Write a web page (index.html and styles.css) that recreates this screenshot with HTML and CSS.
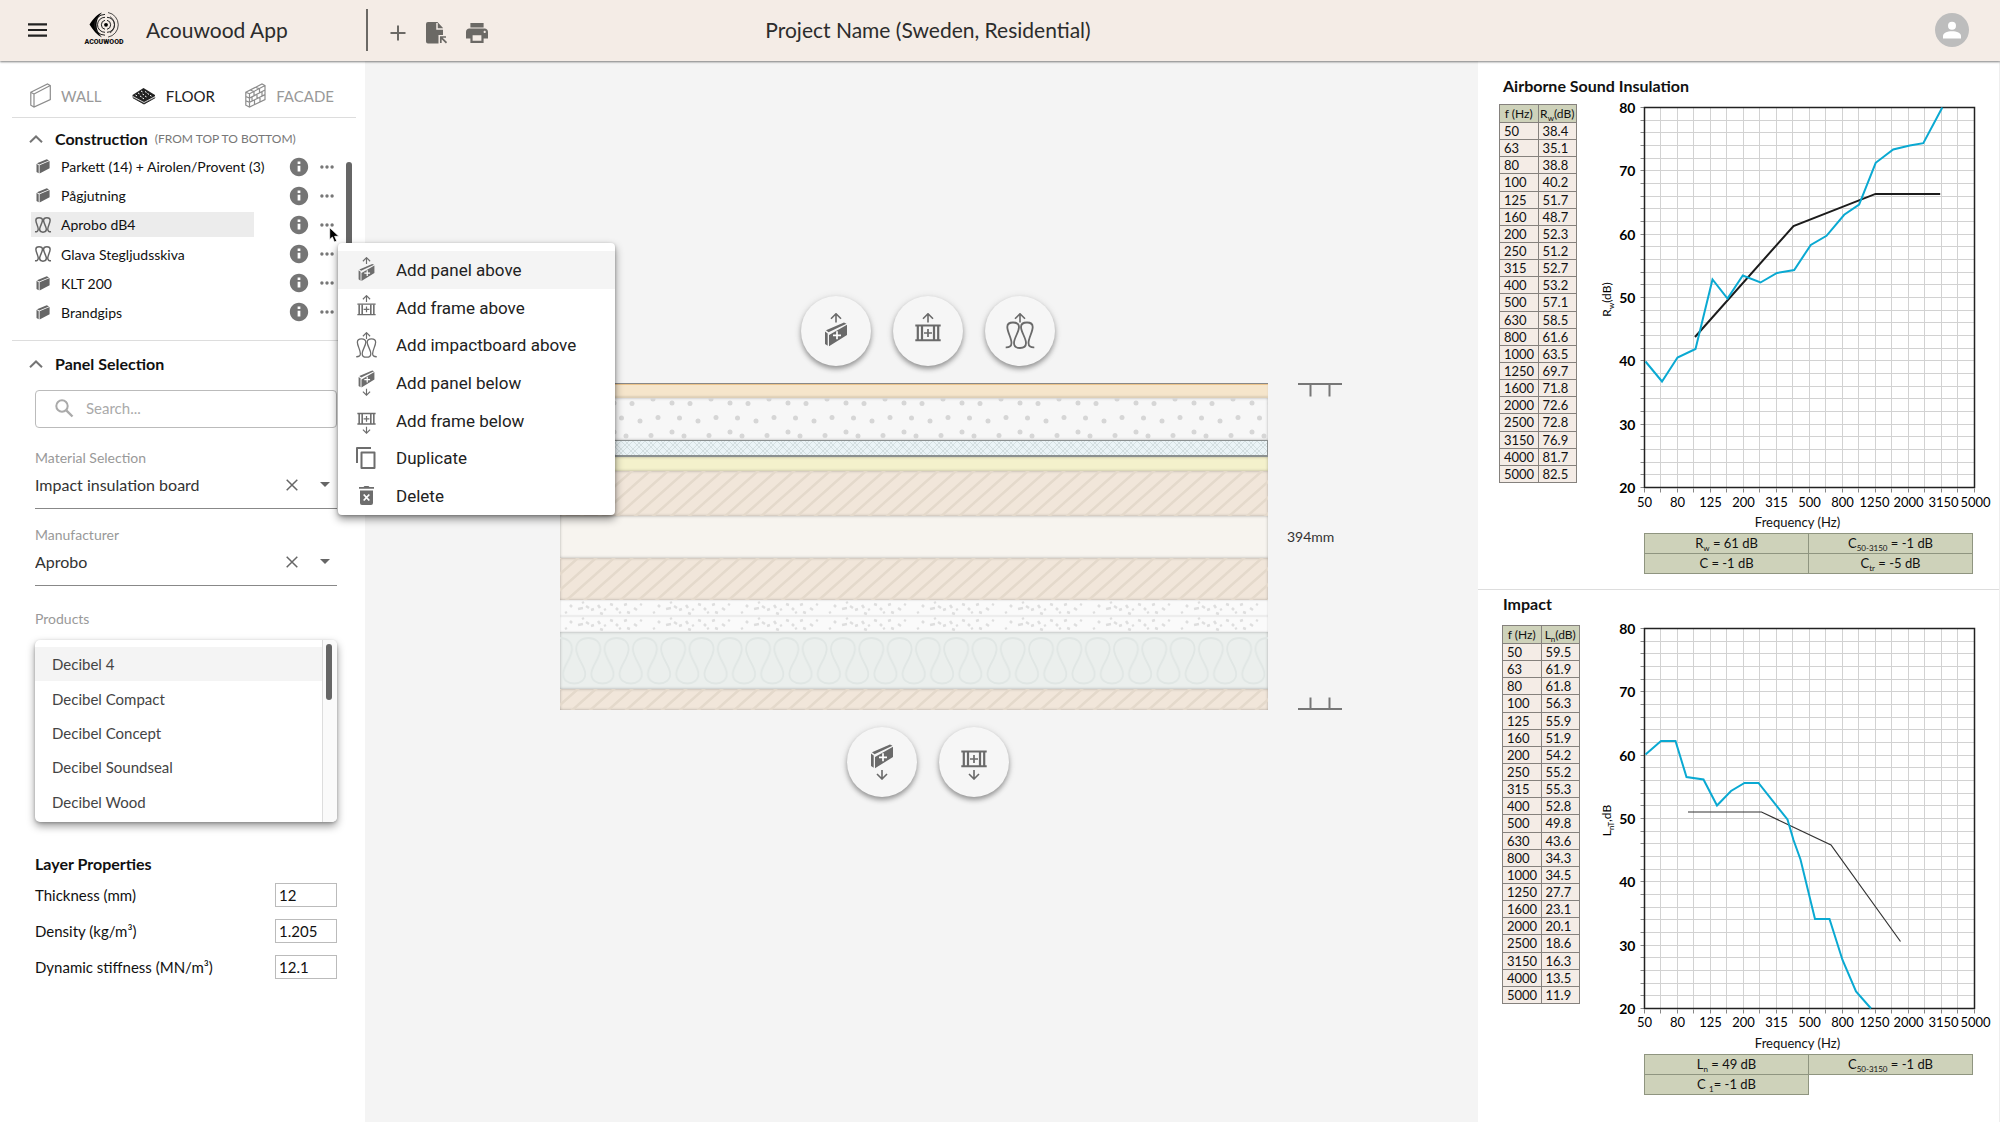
FILE: index.html
```html
<!DOCTYPE html>
<html lang="en">
<head>
<meta charset="utf-8">
<meta name="viewport" content="width=device-width, initial-scale=1">
<title>Acouwood App</title>
<link rel="stylesheet" href="styles.css">
</head>
<body>
<svg class="defs" aria-hidden="true">
  <defs>
    <symbol id="arrow-up" viewBox="0 0 32 36"><path d="M16 9.500V1M11 5.800l5-5 5 5" fill="none" stroke="currentColor" stroke-width="1.600"/></symbol>
    <g id="slab"><path d="M9 22 27 11.700V22L9 33.300zM5 18.500l2.700 2V32.800L5 31zM6 17.300 24 9.500l2.500 1.200-18 8.500z" fill="currentColor"/><path d="M17 18.300v8M13 22.300h8" stroke="#fff" stroke-width="1.700"/></g>
    <g id="frame"><path d="M3.300 12.600h25.400M3.300 27.200h25.400" stroke="currentColor" stroke-width="2"/><path d="M5.800 13v14M10 13v14M22 13v14M26.200 13v14" stroke="currentColor" stroke-width="2.200"/><path d="M16 16v8M12 20h8" stroke="currentColor" stroke-width="1.700"/></g>
    <path id="coil" d="M1.700 34.300C5 34.500 7.500 33.500 7.500 30 7.500 25 3.300 19 3.300 14 3.300 11 5.500 9.500 9 9.500S15 11 15 14C15 19 10 25 10 30 10 33.500 12.500 35 16 35S22 33.500 22 30C22 25 17 19 17 14 17 11 19.500 9.500 23 9.500S28.700 11 28.700 14C28.700 19 24.500 25 24.500 30 24.500 33.500 27 34.500 30.300 34.300" fill="none" stroke="currentColor"/>
    <symbol id="panel-above" viewBox="0 0 32 36"><use href="#arrow-up" width="32" height="36"/><use href="#slab"/></symbol>
    <symbol id="frame-above" viewBox="0 0 32 36"><use href="#arrow-up" width="32" height="36"/><use href="#frame"/></symbol>
    <symbol id="impact-above" viewBox="0 0 32 36"><use href="#arrow-up" width="32" height="36"/><use href="#coil" stroke-width="1.800"/></symbol>
    <symbol id="panel-below" viewBox="0 0 32 36"><use href="#slab" y="-9"/><path d="M16 26v8.500M11 30l5 5 5-5" fill="none" stroke="currentColor" stroke-width="1.600"/></symbol>
    <symbol id="frame-below" viewBox="0 0 32 36"><use href="#frame" y="-5"/><path d="M16 26v8.500M11 30l5 5 5-5" fill="none" stroke="currentColor" stroke-width="1.600"/></symbol>
    <symbol id="panel" viewBox="0 0 14 15"><path d="M3.600 6.300 13.600 2v7.200L3.600 14.500zM.5 4.800l2.200 1.400v8L.5 12.900zM1 4.200 10.800.300 13 1.400 3.200 5.500z" fill="currentColor"/></symbol>
    <symbol id="impact" viewBox="0 8 32 28.500"><use href="#coil" stroke-width="2.600"/></symbol>
    <symbol id="info" viewBox="0 0 24 24"><path d="M12 2C6.480 2 2 6.480 2 12s4.480 10 10 10 10-4.480 10-10S17.520 2 12 2zm1.500 15h-3v-6.500h3V17zm0-8.200h-3V6h3v2.800z" fill="currentColor"/></symbol>
    <symbol id="dots" viewBox="0 0 14 4"><circle cx="1.900" cy="2" r="1.700"/><circle cx="7" cy="2" r="1.700"/><circle cx="12.100" cy="2" r="1.700"/></symbol>
    <symbol id="chevron" viewBox="0 0 14 8"><path d="M1 7.200 7 1.500l6 5.700" fill="none" stroke="#757575" stroke-width="2"/></symbol>
    <symbol id="close" viewBox="0 0 12 12"><path d="M.7.700l10.600 10.600M11.300.700.7 11.300" stroke="#666" stroke-width="1.500"/></symbol>
    <symbol id="caret" viewBox="0 0 10 5"><path d="M0 0h10L5 5z" fill="#666"/></symbol>

    <pattern id="hatch" width="18" height="16" patternUnits="userSpaceOnUse"><path d="M-2 17.800 20-1.800M-20 17.800 2-1.800M16 17.800 38-1.800" stroke="#e4d9cb" stroke-width="2.500"/></pattern>
    <pattern id="pebbles" width="58" height="42" patternUnits="userSpaceOnUse"><g fill="#d6d6d6"><circle cx="54" cy="5" r="2.500"/><circle cx="14" cy="5.500" r="2.500"/><circle cx="35" cy="1" r="2.500"/><circle cx="40" cy="19.500" r="2.500"/><circle cx="3.500" cy="20" r="2.500"/><circle cx="22" cy="23" r="2.500"/><circle cx="54" cy="34" r="2.500"/><circle cx="33" cy="37.500" r="2.500"/><circle cx="8" cy="38" r="2.500"/></g></pattern>
    <pattern id="mesh" width="12" height="12" patternUnits="userSpaceOnUse"><path d="M0 0l12 12M12 0 0 12M-1 7l6 6M3-1l10 10M13 7l-6 6M9-1l-10 10" stroke="#d0dbde" stroke-width=".9"/></pattern>
    <pattern id="grains" width="88" height="16" patternUnits="userSpaceOnUse"><path d="M10 5l2 2M18 9l5-1M26 6l3 2M31 10l3-1M38 5l2 3M44 10l2-1M50 4l3 1M56 8l2 2M64 5l3-1M67 12l3 1M74 8l3 2M80 4l2 1M22 3l2-1M5 13l2-1M40 13l3 1M59 13l2-1" stroke="#dedede" stroke-width="2.500"/></pattern>
    <pattern id="loops" width="28.300" height="57" patternUnits="userSpaceOnUse" patternTransform="translate(-14 0)"><path d="M-11 42C-11 48-6 51.500 0 51.500S11 48 11 42C11 34 2 26 2 17 2 10 7 6 14 6S26 10 26 17C26 26 17 34 17 42 17 48 22 51.500 28.300 51.500S39 48 39 42" fill="none" stroke="#e0e6e4" stroke-width="1.800"/></pattern>
    <g id="plot-grid">
      <path d="M16 0V380M33 0V380M49 0V380M66 0V380M82 0V380M99 0V380M115 0V380M132 0V380M148 0V380M165 0V380M181 0V380M198 0V380M214 0V380M231 0V380M247 0V380M264 0V380M280 0V380M297 0V380M313 0V380M0 13H330M0 25H330M0 38H330M0 51H330M0 63H330M0 76H330M0 89H330M0 101H330M0 114H330M0 127H330M0 139H330M0 152H330M0 165H330M0 177H330M0 190H330M0 203H330M0 215H330M0 228H330M0 241H330M0 253H330M0 266H330M0 279H330M0 291H330M0 304H330M0 317H330M0 329H330M0 342H330M0 355H330M0 367H330" stroke="#d2d2d2"/>
      <path d="M0 381v4M16 381v4M33 381v4M49 381v4M66 381v4M82 381v4M99 381v4M115 381v4M132 381v4M148 381v4M165 381v4M181 381v4M198 381v4M214 381v4M231 381v4M247 381v4M264 381v4M280 381v4M297 381v4M313 381v4M330 381v4M-4 0h4M-4 13h4M-4 25h4M-4 38h4M-4 51h4M-4 63h4M-4 76h4M-4 89h4M-4 101h4M-4 114h4M-4 127h4M-4 139h4M-4 152h4M-4 165h4M-4 177h4M-4 190h4M-4 203h4M-4 215h4M-4 228h4M-4 241h4M-4 253h4M-4 266h4M-4 279h4M-4 291h4M-4 304h4M-4 317h4M-4 329h4M-4 342h4M-4 355h4M-4 367h4M-4 380h4" stroke="#888"/>
      <path d="M0 0H330V380H0z" fill="none" stroke="#222" stroke-width="1.500"/>
    </g>
  </defs>
</svg>

<header class="topbar">
  <div class="brand">
    <button class="icon-btn menu-btn" aria-label="Menu"><svg width="20" height="14" viewBox="0 0 20 14"><path d="M0 1.300h19M0 7h19M0 12.700h19" stroke="#222" stroke-width="2.200"/></svg></button>
    <div class="logo">
      <svg width="30" height="26" viewBox="0 0 30 26" aria-hidden="true">
        <path d="M13 .5C8.500 2 4 7 .5 12.500 4 18 8 23 13 25.500 9 21 7.500 17 7.500 12.800S9 4.500 13 .5z"/>
        <circle cx="17" cy="12.800" r="1.900"/>
        <g fill="none" stroke="#222">
          <path d="M16 8.300a4.600 4.600 0 0 0 0 9M18 8.300a4.600 4.600 0 0 1 0 9"/>
          <path d="M16 5.300a7.500 7.500 0 0 0 0 15M18 5.300a7.500 7.500 0 0 1 0 15"/>
          <path d="M16 2.400a10.400 10.400 0 0 0 0 20.800"/>
          <path d="M19 .5a12.500 12.500 0 0 1 0 24.600M21 4.600a9.700 9.700 0 0 1 0 16.400" stroke-width=".8"/>
        </g>
      </svg>
      <span class="logo-name">ACOUWOOD</span>
    </div>
    <span class="app-name">Acouwood App</span>
  </div>
  <div class="tools">
    <button class="icon-btn" aria-label="New"><svg width="18" height="16" viewBox="0 0 18 16"><path d="M9 .5v15M1.500 8h15" stroke="#6b6965" stroke-width="2"/></svg></button>
    <button class="icon-btn" aria-label="Export"><svg width="21" height="22" viewBox="0 0 21 22"><path d="M2 0h9.500L17 6v7h-4.500v8.500H2a2 2 0 0 1-2-2V2a2 2 0 0 1 2-2z" fill="#6b6965"/><path d="M11 1v6h6" fill="none" stroke="#f4ece6" stroke-width="1.500"/><path d="M14 15h6M14.800 15v6M15 15.300l5.500 5.500" stroke="#6b6965" stroke-width="1.700"/></svg></button>
    <button class="icon-btn" aria-label="Print"><svg width="22" height="20" viewBox="2 3 20 18" preserveAspectRatio="none"><path d="M19 8H5c-1.660 0-3 1.340-3 3v6h4v4h12v-4h4v-6c0-1.660-1.340-3-3-3zm-3 11H8v-5h8v5zm3-7c-.55 0-1-.45-1-1s.45-1 1-1 1 .45 1 1-.45 1-1 1zm-1-9H6v4h12V3z" fill="#6b6965"/></svg></button>
  </div>
  <h1 class="project-title">Project Name (Sweden, Residential)</h1>
  <button class="avatar" aria-label="Account"><svg width="18" height="18" viewBox="0 0 18 18"><circle cx="9" cy="4.800" r="4"/><path d="M0 17.500V15c0-3 4-4.800 9-4.800s9 1.800 9 4.800v2.500z"/></svg></button>
</header>

<div class="workspace">
  <aside class="sidebar">
    <div class="tabs" role="tablist">
      <button class="tab" role="tab" aria-selected="false"><svg width="21" height="25" viewBox="0 0 21 25"><path d="M.8 9.200 17.500 1l2.800 1.500v14L4 24 .8 22.200zM.8 9.200 4 11v13M4 11 20.300 2.500" fill="none" stroke="#8c8c8c" stroke-width="1.200"/></svg>WALL</button>
      <button class="tab active" role="tab" aria-selected="true"><svg width="24" height="18" viewBox="0 0 24 18"><path d="M11.500 1 23 8v2l-11 7L.5 10V8z" fill="#222"/><path d="M.8 10.700 12 17l11.200-6.300" fill="none" stroke="#222"/><path d="M.5 9.300 12 15.500 23.500 9.300" stroke="#fff" stroke-width=".8" fill="none"/><path d="M9 4l1.500.9M13 4.500l1.500.9M6 6l1.500.9M10.500 7l1.500.9M15.500 6.500l1.500.9M3.500 8l1.500.9M8 9l1.500.9M13 9l1.500.9M18 8.300l1.500.9M10.500 11l1.500.9" stroke="#fff"/></svg>FLOOR</button>
      <button class="tab" role="tab" aria-selected="false"><svg width="21" height="25" viewBox="0 0 21 25"><path d="M.8 9.200 17 1l3 1.500v14L4.500 24 .8 22.200zM.8 9.200l3.700 1.600V24M4.500 10.800 20 2.500M.8 13.500l3.700 1.600L20 7M.8 17.800l3.700 1.600L20 11.600M9 8.500v4.300M14.500 5.500v4.300M7 14v4.300M12 11.300v4.300M17 8.700V13M9.500 17v4.300M15 14.300v4.300M5 7l4 1.500M10.500 4.300l4 1.600" fill="none" stroke="#8c8c8c" stroke-width="1.200"/></svg>FACADE</button>
    </div>

    <section class="construction">
      <h2 class="section-title"><svg width="14" height="8"><use href="#chevron"/></svg>Construction <small>(FROM TOP TO BOTTOM)</small></h2>
      <ul class="layers-list">
        <li><span class="layer-name"><svg width="14" height="15"><use href="#panel"/></svg>Parkett (14) + Airolen/Provent (3)</span><button class="icon-btn info" aria-label="Info"><svg width="22" height="22"><use href="#info"/></svg></button><button class="icon-btn more" aria-label="More"><svg width="14" height="4"><use href="#dots"/></svg></button></li>
        <li><span class="layer-name"><svg width="14" height="15"><use href="#panel"/></svg>Pågjutning</span><button class="icon-btn info" aria-label="Info"><svg width="22" height="22"><use href="#info"/></svg></button><button class="icon-btn more" aria-label="More"><svg width="14" height="4"><use href="#dots"/></svg></button></li>
        <li><span class="layer-name selected"><svg class="wide" width="18" height="16"><use href="#impact"/></svg>Aprobo dB4</span><button class="icon-btn info" aria-label="Info"><svg width="22" height="22"><use href="#info"/></svg></button><button class="icon-btn more" aria-label="More"><svg width="14" height="4"><use href="#dots"/></svg></button></li>
        <li><span class="layer-name"><svg class="wide" width="18" height="16"><use href="#impact"/></svg>Glava Stegljudsskiva</span><button class="icon-btn info" aria-label="Info"><svg width="22" height="22"><use href="#info"/></svg></button><button class="icon-btn more" aria-label="More"><svg width="14" height="4"><use href="#dots"/></svg></button></li>
        <li><span class="layer-name"><svg width="14" height="15"><use href="#panel"/></svg>KLT 200</span><button class="icon-btn info" aria-label="Info"><svg width="22" height="22"><use href="#info"/></svg></button><button class="icon-btn more" aria-label="More"><svg width="14" height="4"><use href="#dots"/></svg></button></li>
        <li><span class="layer-name"><svg width="14" height="15"><use href="#panel"/></svg>Brandgips</span><button class="icon-btn info" aria-label="Info"><svg width="22" height="22"><use href="#info"/></svg></button><button class="icon-btn more" aria-label="More"><svg width="14" height="4"><use href="#dots"/></svg></button></li>
      </ul>
      <span class="list-thumb"></span>
    </section>

    <section class="selection">
      <h2 class="section-title"><svg width="14" height="8"><use href="#chevron"/></svg>Panel Selection</h2>
      <label class="search">
        <svg width="19" height="19" viewBox="0 0 19 19" aria-hidden="true"><circle cx="7" cy="7" r="5.700" fill="none" stroke="#aaa" stroke-width="2"/><path d="M11.300 11.300 17.500 17.500" stroke="#aaa" stroke-width="2.400"/></svg>
        <input type="search" placeholder="Search..." aria-label="Search">
      </label>

      <label class="field-label" for="material">Material Selection</label>
      <div class="picker">
        <select id="material"><option>Impact insulation board</option></select>
        <button class="icon-btn" aria-label="Clear material"><svg width="12" height="12"><use href="#close"/></svg></button>
        <svg class="caret" width="10" height="5"><use href="#caret"/></svg>
      </div>

      <label class="field-label" for="maker">Manufacturer</label>
      <div class="picker">
        <select id="maker"><option>Aprobo</option></select>
        <button class="icon-btn" aria-label="Clear manufacturer"><svg width="12" height="12"><use href="#close"/></svg></button>
        <svg class="caret" width="10" height="5"><use href="#caret"/></svg>
      </div>

      <span class="field-label products-label" id="products">Products</span>
      <div class="products">
        <ul role="listbox" aria-labelledby="products">
          <li role="option" aria-selected="true">Decibel 4</li>
          <li role="option">Decibel Compact</li>
          <li role="option">Decibel Concept</li>
          <li role="option">Decibel Soundseal</li>
          <li role="option">Decibel Wood</li>
        </ul>
        <div class="products-track"><span></span></div>
      </div>
    </section>

    <section class="properties">
      <h2>Layer Properties</h2>
      <div class="prop"><label for="thickness">Thickness (mm)</label><input id="thickness" type="text" value="12"></div>
      <div class="prop"><label for="density">Density (kg/m³)</label><input id="density" type="text" value="1.205"></div>
      <div class="prop"><label for="stiffness">Dynamic stiffness (MN/m³)</label><input id="stiffness" type="text" value="12.1"></div>
    </section>

    <svg class="cursor" width="11" height="16" viewBox="0 0 11 16" aria-hidden="true"><path d="M.7.700v11.800l2.700-2.500 2 5 2.300-1-2.100-4.700h4.200z" fill="#000" stroke="#fff" stroke-width=".7"/></svg>
    <div class="context-menu" role="menu">
      <button role="menuitem" class="hover"><svg width="23" height="26"><use href="#panel-above"/></svg>Add panel above</button>
      <button role="menuitem"><svg width="23" height="26"><use href="#frame-above"/></svg>Add frame above</button>
      <button role="menuitem"><svg width="23" height="26"><use href="#impact-above"/></svg>Add impactboard above</button>
      <button role="menuitem"><svg width="23" height="26"><use href="#panel-below"/></svg>Add panel below</button>
      <button role="menuitem"><svg width="23" height="26"><use href="#frame-below"/></svg>Add frame below</button>
      <button role="menuitem"><svg width="23" height="24" viewBox="0 0 23 24"><path d="M2 17V2h14M6.500 6.500h13v15.500h-13z" fill="none" stroke="#6d6d6d" stroke-width="2" stroke-linejoin="round"/></svg>Duplicate</button>
      <button role="menuitem"><svg width="23" height="24" viewBox="0 0 23 24"><path d="M4 4.800V3h4.500l1-1h4l1 1H19v1.800zM5 6.500h13V19a2 2 0 0 1-2 2H7a2 2 0 0 1-2-2z" fill="#6d6d6d"/><path d="M8.700 10.500l5.600 6M14.300 10.500l-5.600 6" stroke="#fff" stroke-width="1.800"/></svg>Delete</button>
    </div>
  </aside>

  <main class="canvas">
    <div class="round-row">
      <button class="round" aria-label="Add panel above"><svg width="32" height="36"><use href="#panel-above"/></svg></button>
      <button class="round" aria-label="Add frame above"><svg width="32" height="36"><use href="#frame-above"/></svg></button>
      <button class="round" aria-label="Add impactboard above"><svg width="32" height="36"><use href="#impact-above"/></svg></button>
    </div>
    <div class="section-view">
      <div class="stack">
        <div class="layer parquet"></div>
        <div class="layer screed"><svg><rect width="100%" height="100%" fill="url(#pebbles)"/></svg></div>
        <div class="layer board"><svg><rect width="100%" height="100%" fill="url(#mesh)"/></svg></div>
        <div class="layer wool"></div>
        <div class="layer timber top-timber"><svg><rect width="100%" height="100%" fill="url(#hatch)"/></svg></div>
        <div class="layer cavity"></div>
        <div class="layer timber"><svg><rect width="100%" height="100%" fill="url(#hatch)"/></svg></div>
        <div class="layer gypsum"><svg><rect width="100%" height="100%" fill="url(#grains)"/></svg></div>
        <div class="layer gypsum"><svg><rect width="100%" height="100%" fill="url(#grains)"/></svg></div>
        <div class="layer insulation"><svg><rect width="100%" height="100%" fill="url(#loops)"/></svg></div>
        <div class="layer timber thin-timber"><svg><rect width="100%" height="100%" fill="url(#hatch)"/></svg></div>
      </div>
      <div class="dimension">
        <svg width="44" height="14" viewBox="0 0 44 14"><path d="M0 1h44M12.500 1v12.500M31.500 1v12.500" fill="none" stroke="#777" stroke-width="2"/></svg>
        <span>394mm</span>
        <svg width="44" height="14" viewBox="0 0 44 14"><path d="M0 13h44M12.500 13V1.500M31.500 13V1.500" fill="none" stroke="#777" stroke-width="2"/></svg>
      </div>
    </div>
    <div class="round-row">
      <button class="round" aria-label="Add panel below"><svg width="32" height="36"><use href="#panel-below"/></svg></button>
      <button class="round" aria-label="Add frame below"><svg width="32" height="36"><use href="#frame-below"/></svg></button>
    </div>
  </main>

  <aside class="results">
    <section class="result airborne">
      <h2>Airborne Sound Insulation</h2>
      <div class="result-body">
        <table class="bands">
          <thead><tr><th>f (Hz)</th><th>R<sub>w</sub>(dB)</th></tr></thead>
          <tbody>
            <tr><td>50</td><td>38.4</td></tr>
            <tr><td>63</td><td>35.1</td></tr>
            <tr><td>80</td><td>38.8</td></tr>
            <tr><td>100</td><td>40.2</td></tr>
            <tr><td>125</td><td>51.7</td></tr>
            <tr><td>160</td><td>48.7</td></tr>
            <tr><td>200</td><td>52.3</td></tr>
            <tr><td>250</td><td>51.2</td></tr>
            <tr><td>315</td><td>52.7</td></tr>
            <tr><td>400</td><td>53.2</td></tr>
            <tr><td>500</td><td>57.1</td></tr>
            <tr><td>630</td><td>58.5</td></tr>
            <tr><td>800</td><td>61.6</td></tr>
            <tr><td>1000</td><td>63.5</td></tr>
            <tr><td>1250</td><td>69.7</td></tr>
            <tr><td>1600</td><td>71.8</td></tr>
            <tr><td>2000</td><td>72.6</td></tr>
            <tr><td>2500</td><td>72.8</td></tr>
            <tr><td>3150</td><td>76.9</td></tr>
            <tr><td>4000</td><td>81.7</td></tr>
            <tr><td>5000</td><td>82.5</td></tr>
          </tbody>
        </table>
        <figure class="chart">
          <svg width="404" height="408" viewBox="0 0 404 408">
            <g transform="translate(48.500 3.500)">
              <use href="#plot-grid"/>
              <polyline points="50.500,229.500 149,118.500 231,86.400 295.700,86.400" fill="none" stroke="#1c1c1c" stroke-width="2"/>
              <polyline points="1,254 17.500,274 33,250 51,241.500 68,172 83,191 98.300,168 116,175 132.500,165.500 149.700,162.500 166.300,137.400 182,128.300 199.700,107.300 214.600,97 231.200,55.300 248.700,42 265.300,38 278.800,35.700 297.800,0" fill="none" stroke="#0aa9d2" stroke-width="2"/>
              <g class="y-labels"><text x="-9" y="5">80</text><text x="-9" y="68">70</text><text x="-9" y="132">60</text><text x="-9" y="195">50</text><text x="-9" y="258">40</text><text x="-9" y="322">30</text><text x="-9" y="385">20</text></g>
              <g class="x-labels"><text x="0" y="399">50</text><text x="33" y="399">80</text><text x="66" y="399">125</text><text x="99" y="399">200</text><text x="132" y="399">315</text><text x="165" y="399">500</text><text x="198" y="399">800</text><text x="230" y="399">1250</text><text x="264" y="399">2000</text><text x="299" y="399">3150</text><text x="331" y="399">5000</text></g>
              <text class="axis-title" transform="translate(-34 192) rotate(-90)">R<tspan dy="3" font-size="8">w</tspan><tspan dy="-3">(dB)</tspan></text>
            </g>
          </svg>
          <figcaption>Frequency (Hz)</figcaption>
          <table class="ratings">
            <tr><td>R<sub>w</sub> = 61 dB</td><td>C<sub>50-3150</sub> = -1 dB</td></tr>
            <tr><td>C = -1 dB</td><td>C<sub>tr</sub> = -5 dB</td></tr>
          </table>
        </figure>
      </div>
    </section>
    <section class="result impact">
      <h2>Impact</h2>
      <div class="result-body">
        <table class="bands">
          <thead><tr><th>f (Hz)</th><th>L<sub>n</sub>(dB)</th></tr></thead>
          <tbody>
            <tr><td>50</td><td>59.5</td></tr>
            <tr><td>63</td><td>61.9</td></tr>
            <tr><td>80</td><td>61.8</td></tr>
            <tr><td>100</td><td>56.3</td></tr>
            <tr><td>125</td><td>55.9</td></tr>
            <tr><td>160</td><td>51.9</td></tr>
            <tr><td>200</td><td>54.2</td></tr>
            <tr><td>250</td><td>55.2</td></tr>
            <tr><td>315</td><td>55.3</td></tr>
            <tr><td>400</td><td>52.8</td></tr>
            <tr><td>500</td><td>49.8</td></tr>
            <tr><td>630</td><td>43.6</td></tr>
            <tr><td>800</td><td>34.3</td></tr>
            <tr><td>1000</td><td>34.5</td></tr>
            <tr><td>1250</td><td>27.7</td></tr>
            <tr><td>1600</td><td>23.1</td></tr>
            <tr><td>2000</td><td>20.1</td></tr>
            <tr><td>2500</td><td>18.6</td></tr>
            <tr><td>3150</td><td>16.3</td></tr>
            <tr><td>4000</td><td>13.5</td></tr>
            <tr><td>5000</td><td>11.9</td></tr>
          </tbody>
        </table>
        <figure class="chart">
          <svg width="404" height="408" viewBox="0 0 404 408">
            <g transform="translate(48.500 3.500)">
              <use href="#plot-grid"/>
              <polyline points="43.500,183.500 117,183.500 186.500,216.500 256,313" fill="none" stroke="#333" stroke-width="1.200"/>
              <polyline points="1,126 16.500,112.500 31,112.500 42,148.500 59,151 72.500,177 86.500,162.500 100,154.500 114,154.500 143,191 149,211.500 156,231 170.500,290.500 185,290.500 198,331.500 211.500,363 226.500,380" fill="none" stroke="#0aa9d2" stroke-width="2"/>
              <g class="y-labels"><text x="-9" y="5">80</text><text x="-9" y="68">70</text><text x="-9" y="132">60</text><text x="-9" y="195">50</text><text x="-9" y="258">40</text><text x="-9" y="322">30</text><text x="-9" y="385">20</text></g>
              <g class="x-labels"><text x="0" y="398">50</text><text x="33" y="398">80</text><text x="66" y="398">125</text><text x="99" y="398">200</text><text x="132" y="398">315</text><text x="165" y="398">500</text><text x="198" y="398">800</text><text x="230" y="398">1250</text><text x="264" y="398">2000</text><text x="299" y="398">3150</text><text x="331" y="398">5000</text></g>
              <text class="axis-title" transform="translate(-34 192) rotate(-90)">L<tspan dy="3" font-size="8">nT</tspan><tspan dy="-3">,dB</tspan></text>
            </g>
          </svg>
          <figcaption>Frequency (Hz)</figcaption>
          <table class="ratings">
            <tr><td>L<sub>n</sub> = 49 dB</td><td>C<sub>50-3150</sub> = -1 dB</td></tr>
            <tr><td>C <sub>1</sub>= -1 dB</td></tr>
          </table>
        </figure>
      </div>
    </section>
  </aside>
</div>
</body>
</html>
```
FILE: styles.css
```css
* { box-sizing: border-box; }

body {
  margin: 0;
  min-height: 100vh;
  display: flex;
  flex-direction: column;
  font-family: Lato, "Open Sans", sans-serif;
  font-size: 15px;
  color: #111;
  background: #fff;
}

h1, h2, ul, figure { margin: 0; padding: 0; }
ul { list-style: none; }
button, input, select { font: inherit; color: inherit; }
button { border: 0; background: none; padding: 0; cursor: pointer; }
svg { display: block; flex: none; }

.defs { position: absolute; width: 0; height: 0; }
.icon-btn { display: flex; align-items: center; justify-content: center; }

/* Top bar */
.topbar {
  position: relative;
  z-index: 2;
  height: 61px;
  padding-bottom: 2px;
  display: grid;
  grid-template-columns: 366px 200px 1fr 710px;
  align-items: center;
  background: #f4ece6;
  box-shadow: 0 1px 2px rgba(0, 0, 0, .5);
}
.brand { display: flex; align-items: center; padding-left: 28px; }
.menu-btn { width: 20px; }
.logo {
  display: flex;
  flex-direction: column;
  align-items: center;
  width: 46px;
  margin: 0 19px 0 33px;
}
.logo-name { font: 900 7px/9px Roboto, sans-serif; }
.app-name { font-size: 21px; color: #2c2c2c; }
.tools {
  display: flex;
  align-items: center;
  gap: 19px;
  height: 42px;
  padding: 6px 0 0 21px;
  border-left: 2px solid #6b6965;
}
.project-title {
  font-size: 21px;
  font-weight: 400;
  color: #2c2c2c;
  text-align: center;
  white-space: nowrap;
}
.avatar {
  justify-self: end;
  margin-right: 31px;
  width: 34px;
  height: 34px;
  border-radius: 50%;
  background: #bdbdbd;
  display: flex;
  align-items: center;
  justify-content: center;
}
.avatar svg { fill: #fff; }

.workspace {
  flex: 1;
  display: grid;
  grid-template-columns: 365px 1fr 522px;
}

/* Sidebar */
.sidebar { position: relative; background: #fff; }
.tabs {
  display: flex;
  align-items: center;
  justify-content: space-between;
  height: 57px;
  margin: 0 9px 0 12px;
  padding: 13px 22px 0 18px;
  border-bottom: 1px solid #ddd;
}
.tab { display: flex; align-items: center; gap: 10px; color: #999; }
.tab.active { color: #222; }

.section-title {
  display: flex;
  align-items: center;
  font-size: 16px;
  line-height: 20px;
  font-weight: 700;
}
.section-title svg { margin-right: 12px; }
.section-title small { margin-left: 7px; font-size: 12px; font-weight: 400; color: #777; }

.construction {
  position: relative;
  height: 223px;
  margin-left: 12px;
  padding: 11px 9px 0 17px;
  border-bottom: 1px solid #ddd;
}
.layers-list {
  display: grid;
  grid-template-rows: repeat(6, 1fr);
  height: 175px;
  margin-top: 3px;
}
.layers-list li { display: flex; align-items: center; }
.layer-name {
  display: flex;
  align-items: center;
  gap: 11px;
  width: 225px;
  height: 25px;
  padding-left: 7px;
  margin-right: 34px;
  white-space: nowrap;
  font-size: 14px;
}
.layer-name svg { color: #666; }
.layer-name .wide { margin: 0 -2px; }
.layer-name.selected { background: linear-gradient(#ececec, #ececec) 2px 0 no-repeat; }
.info { width: 22px; margin-right: 10px; color: #757575; }
.more { width: 14px; }
.more svg { fill: #777; }
.list-thumb {
  position: absolute;
  top: 44px;
  right: 13px;
  width: 6px;
  height: 110px;
  border-radius: 3px;
  background: #666;
}

.selection { padding: 13px 28px 0 35px; }
.selection .section-title { margin-left: -6px; }
.search {
  display: flex;
  align-items: center;
  gap: 12px;
  height: 38px;
  margin-top: 16px;
  padding: 0 0 2px 19px;
  border: 1px solid #bbb;
  border-radius: 4px;
}
.search input { width: 200px; border: 0; padding: 0; outline: 0; background: none; font-size: 15px; }
.search input::placeholder { color: #aaa; opacity: 1; }

.field-label { display: block; margin-top: 20px; font-size: 14px; line-height: 20px; color: #999; }
.picker {
  display: flex;
  align-items: center;
  height: 41px;
  padding-right: 7px;
  padding-bottom: 7px;
  border-bottom: 1px solid #888;
}
.picker + .field-label { margin-top: 16px; }
.picker select {
  flex: 1;
  appearance: none;
  border: 0;
  padding: 0;
  background: none;
  font-size: 16px;
  color: #333;
}
.caret { margin-left: 22px; }

.picker + .products-label { margin-top: 23px; margin-bottom: 11px; }
.products {
  display: flex;
  height: 182px;
  border-radius: 5px;
  overflow: hidden;
  background: #fff;
  box-shadow: 0 4px 8px rgba(0, 0, 0, .4), 0 1px 3px rgba(0, 0, 0, .2);
}
.products ul {
  flex: 1;
  padding: 7px 0 3px;
  display: grid;
  grid-template-rows: repeat(5, 1fr);
}
.products li { display: flex; align-items: center; padding-left: 17px; color: #444; }
.products li[aria-selected] { background: #f4f4f4; }
.products-track { width: 15px; padding: 4px 3px; border-left: 1px solid #ddd; background: #fafafa; }
.products-track span { display: block; width: 6px; height: 56px; border-radius: 3px; background: #666; }

.properties { padding: 32px 28px 0 35px; }
.properties h2 { font-size: 16px; line-height: 20px; margin-bottom: 9px; }
.prop { display: flex; align-items: center; justify-content: space-between; height: 24px; margin-bottom: 12px; }
.prop input {
  width: 62px;
  height: 24px;
  padding: 0 3px;
  border: 1px solid #bbb;
}

.cursor { position: absolute; left: 329px; top: 166px; z-index: 3; }

.context-menu {
  position: absolute;
  z-index: 4;
  left: 338px;
  top: 182px;
  width: 277px;
  height: 272px;
  padding-top: 8px;
  display: grid;
  grid-template-rows: repeat(7, 1fr);
  border-radius: 4px;
  background: #fff;
  box-shadow: 0 4px 9px rgba(0, 0, 0, .45), 0 1px 3px rgba(0, 0, 0, .25);
}
.context-menu button {
  display: flex;
  align-items: center;
  gap: 18px;
  padding-left: 17px;
  font: 17px/20px Roboto, sans-serif;
  color: #222;
}
.context-menu button svg { color: #6d6d6d; }
.context-menu .hover { background: #f4f4f4; }

/* Canvas */
.canvas { padding-top: 235px; background: #f4f4f4; }
.round-row { display: flex; justify-content: center; gap: 22px; padding-left: 12px; }
.round {
  display: flex;
  align-items: center;
  justify-content: center;
  width: 70px;
  height: 70px;
  border-radius: 50%;
  background: #f6f6f6;
  color: #6a6a6a;
  box-shadow: 0 3px 5px rgba(0, 0, 0, .35), 0 1px 8px rgba(0, 0, 0, .1);
}
.section-view {
  display: grid;
  grid-template-columns: 1fr 55px;
  gap: 19px;
  margin: 17px 136px 17px 195px;
}
.layer { height: 42px; box-shadow: inset 0 0 3px rgba(0, 0, 0, .3); }
.layer svg { width: 100%; height: 100%; }
.parquet { height: 15px; background: #f5e5cb; border-top: 1px solid #888; box-shadow: inset 0 1px 0 #ecc48c, inset 0 -2px 2px rgba(0, 0, 0, .1); }
.screed { background: #f7f7f7; }
.board { height: 17px; background: #eaf3f6; border: 1px solid #8b9090; border-bottom-width: 2px; box-shadow: none; }
.wool { height: 14px; background: #f4f1cc; }
.timber { background: #f1e6da; }
.top-timber { height: 45px; }
.thin-timber { height: 21px; }
.cavity { background: #f7f4ef; }
.gypsum { height: 16px; background: #fafafa; box-shadow: inset 0 0 2px rgba(0, 0, 0, .2); }
.insulation { height: 57px; background: #ebefed; }
.dimension {
  display: flex;
  flex-direction: column;
  justify-content: space-between;
  font-size: 14px;
  color: #333;
}
.dimension svg { align-self: flex-end; }
.dimension span { padding-bottom: 20px; }

/* Results */
.results { background: #fff; border-right: 1px solid #eee; }
.result { padding-left: 21px; }
.result h2 { font-size: 16px; line-height: 20px; margin-left: 4px; }
.airborne { height: 529px; padding-top: 15px; border-bottom: 1px solid #ddd; }
.airborne .result-body { margin-top: 8px; }
.impact { padding-top: 4px; }
.impact .result-body { margin-top: 11px; }
.impact .bands { margin-left: 3px; }
.result-body { display: flex; justify-content: space-between; align-items: flex-start; }

table { border-collapse: collapse; }
sub { font-size: 8px; line-height: 0; vertical-align: -3px; }
.bands {
  table-layout: fixed;
  width: 78px;
  height: 379px;
  font-size: 13px;
  line-height: 14px;
  background: #f4ece6;
}
.bands td, .bands th { border: 1px solid #85817d; padding: 0 0 0 4px; text-align: left; }
.bands th { height: 18px; padding: 0; text-align: center; font-size: 12px; font-weight: 400; background: #ced2ba; }

.chart { width: 403px; }
.chart svg { overflow: visible; }
.chart figcaption { font-size: 13px; line-height: 20px; text-align: center; }
.y-labels { font-size: 14px; font-weight: 700; text-anchor: end; }
.x-labels { font-size: 13px; text-anchor: middle; }
.axis-title { font-size: 12px; text-anchor: middle; }
.ratings {
  table-layout: fixed;
  width: 329px;
  margin: 1px 0 0 48px;
  font-size: 13px;
  line-height: 19px;
}
.ratings td { height: 20px; padding: 0; border: 1px solid #8f9580; background: #ced2ba; text-align: center; }
```
